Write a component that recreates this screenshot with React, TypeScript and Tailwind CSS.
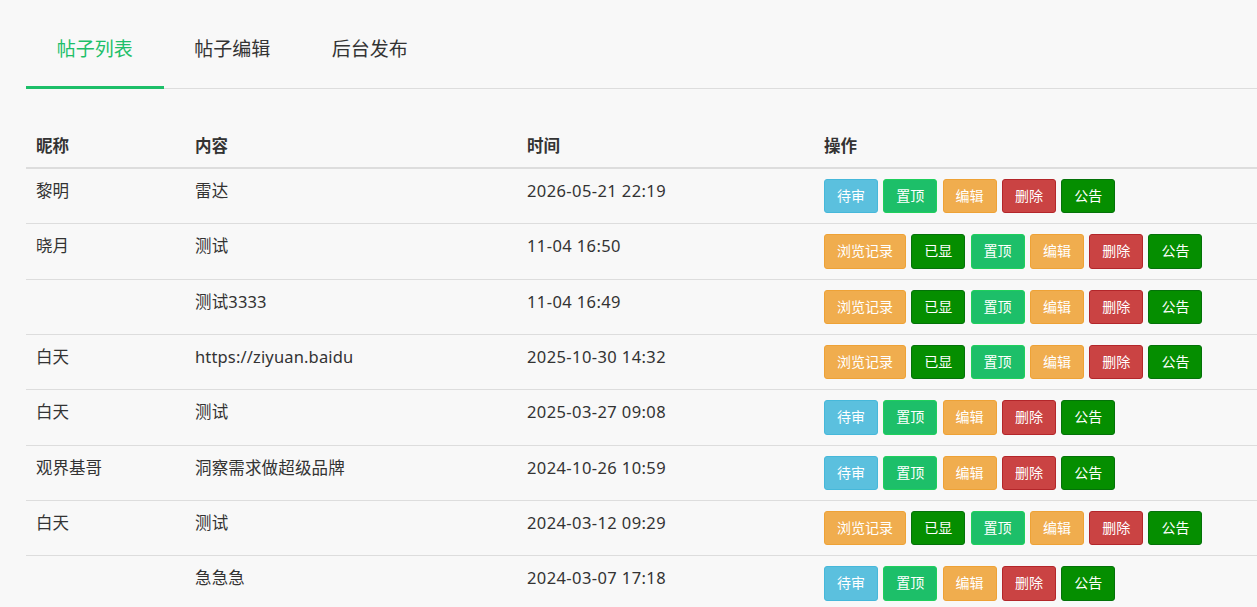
import React from "react";

type Post = {
  nick: string;
  content: string;
  time: string;
  shown: boolean;
};

const posts: Post[] = [
  { nick: "黎明", content: "雷达", time: "2026-05-21 22:19", shown: false },
  { nick: "晓月", content: "测试", time: "11-04 16:50", shown: true },
  { nick: "", content: "测试3333", time: "11-04 16:49", shown: true },
  { nick: "白天", content: "https://ziyuan.baidu", time: "2025-10-30 14:32", shown: true },
  { nick: "白天", content: "测试", time: "2025-03-27 09:08", shown: false },
  { nick: "观界基哥", content: "洞察需求做超级品牌", time: "2024-10-26 10:59", shown: false },
  { nick: "白天", content: "测试", time: "2024-03-12 09:29", shown: true },
  { nick: "", content: "急急急", time: "2024-03-07 17:18", shown: false },
];

const tabs = ["帖子列表", "帖子编辑", "后台发布"];

const btnBase =
  "h-[34.33px] px-3 rounded-[3px] border text-[14px] leading-none text-white whitespace-nowrap";

function Btn({ kind, children }: { kind: string; children: React.ReactNode }) {
  const colors: Record<string, string> = {
    info: "bg-[#5bc0de] border-[#46b8da]",
    green: "bg-[#1dbf69] border-[#1fcf5c]",
    warn: "bg-[#f0ad4e] border-[#eea236]",
    danger: "bg-[#ca4343] border-[#b3262a]",
    dark: "bg-[#058e00] border-[#047209]",
  };
  return <button className={`${btnBase} ${colors[kind]}`}>{children}</button>;
}

export default function App() {
  return (
    <div
      className="min-h-screen bg-[#f8f8f8] text-[#333] overflow-hidden"
      style={{ fontFamily: '"Noto Sans", "Noto Sans CJK SC", sans-serif' }}
    >
      {/* Tabs */}
      <div className="ml-[26px] pt-[12px] flex border-b border-[#dddddd]">
        {tabs.map((t, i) => (
          <div
            key={t}
            className={
              "w-[137.5px] h-[77px] -mb-px flex items-center justify-center text-[19px] border-b-[3px] " +
              (i === 0 ? "border-[#1dbf69] text-[#1dbf69]" : "border-transparent text-[#333]")
            }
          >
            {t}
          </div>
        ))}
      </div>

      {/* Table */}
      <table className="ml-[26px] mt-[36px] w-[calc(100%-26px)] border-collapse text-[16.5px]">
        <thead>
          <tr className="border-b-2 border-[#dddddd]">
            <th className="w-[159px] px-[10px] py-[10px] text-left font-bold leading-[22px]">昵称</th>
            <th className="w-[332px] px-[10px] py-[10px] text-left font-bold leading-[22px]">内容</th>
            <th className="w-[297px] px-[10px] py-[10px] text-left font-bold leading-[22px]">时间</th>
            <th className="px-[10px] py-[10px] text-left font-bold leading-[22px]">操作</th>
          </tr>
        </thead>
        <tbody>
          {posts.map((p, i) => (
            <tr key={i} className="border-b border-[#dddddd]">
              <td className="px-[10px] py-[10px] align-top leading-[24px]">{p.nick}</td>
              <td className="px-[10px] py-[10px] align-top leading-[24px] tracking-[0.15px]">{p.content}</td>
              <td className="px-[10px] py-[10px] align-top leading-[24px] tracking-[0.4px]">{p.time}</td>
              <td className="px-[10px] py-[10px] align-top">
                <div className="flex gap-[5.3px]">
                  {p.shown ? (
                    <>
                      <Btn kind="warn">浏览记录</Btn>
                      <Btn kind="dark">已显</Btn>
                    </>
                  ) : (
                    <Btn kind="info">待审</Btn>
                  )}
                  <Btn kind="green">置顶</Btn>
                  <Btn kind="warn">编辑</Btn>
                  <Btn kind="danger">删除</Btn>
                  <Btn kind="dark">公告</Btn>
                </div>
              </td>
            </tr>
          ))}
        </tbody>
      </table>
    </div>
  );
}
